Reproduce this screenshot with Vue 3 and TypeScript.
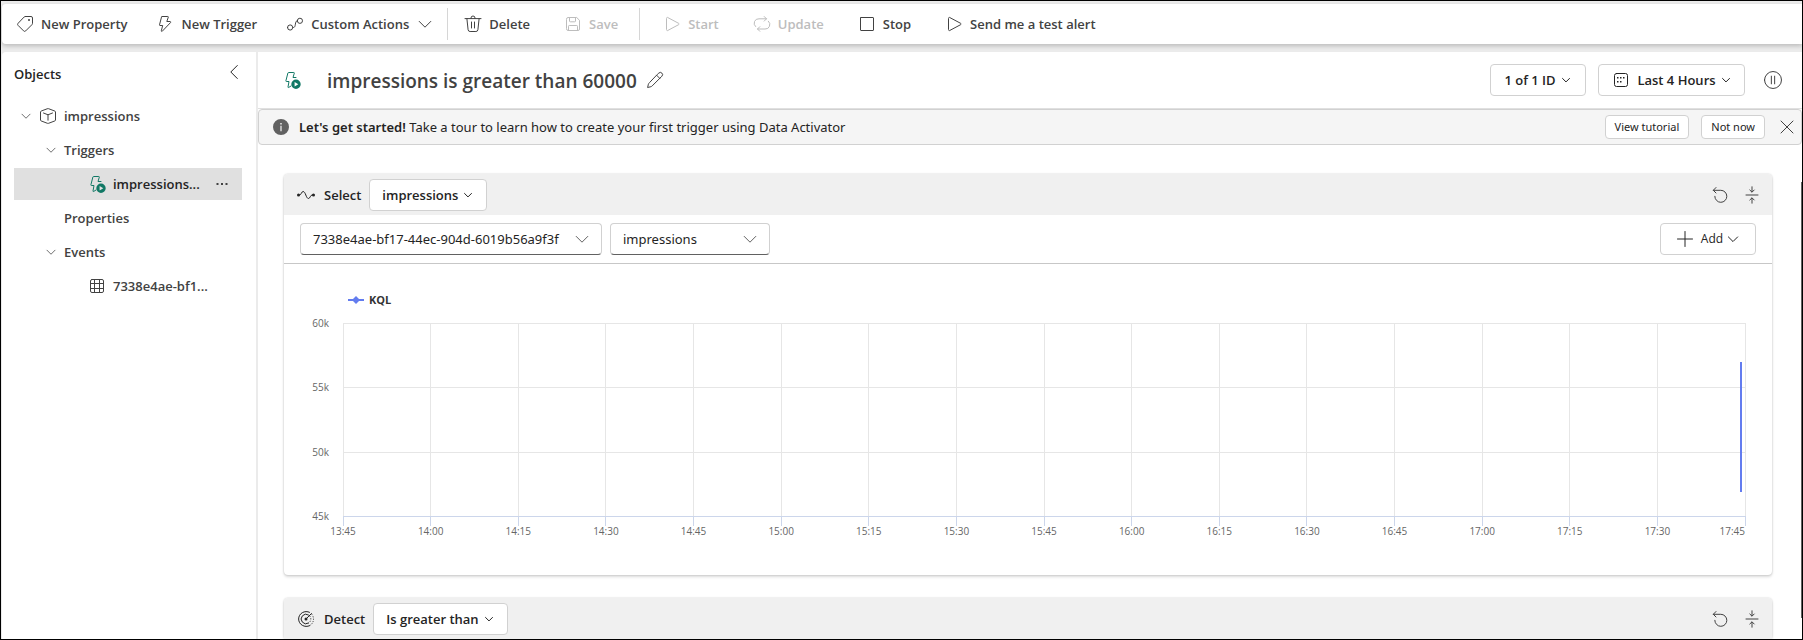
<script setup lang="ts">
import { h, ref } from 'vue'
import type { FunctionalComponent } from 'vue'

interface Glyph {
  stroke?: string
  fill?: string
  thin?: string
}

const glyphs: Record<string, Glyph> = {
  tag: {
    stroke: 'M10.4 2.5H16A1.5 1.5 0 0 1 17.5 4v5.3a2 2 0 0 1-.6 1.4l-6.2 6.2a1.5 1.5 0 0 1-2.1 0l-5.5-5.5a1.5 1.5 0 0 1 0-2.1L9 3.1a2 2 0 0 1 1.4-.6z',
    fill: 'M13 6a1 1 0 1 0 2 0a1 1 0 1 0-2 0z',
  },
  flash: {
    stroke: 'M7.2 2.5h5.6c.4 0 .6.3.5.7L11.8 7.5h3.4c.5 0 .7.6.4 1l-8.4 8.8c-.4.4-1 0-.9-.5l1.4-5.3H5c-.4 0-.6-.3-.5-.7l2-7.7c.1-.4.4-.6.7-.6z',
  },
  flow: {
    stroke: 'M2.5 13.5a2.6 2.6 0 1 0 5.2 0a2.6 2.6 0 1 0-5.2 0zM12.3 6.8a2.6 2.6 0 1 0 5.2 0a2.6 2.6 0 1 0-5.2 0zM7.7 13.5h.6c3.2 0 .9-6.7 4-6.7',
  },
  trash: {
    stroke: 'M2 4.6h16M8 4.6V4a2 2 0 0 1 4 0v.6M3.9 4.6l1.2 11.2a2 2 0 0 0 2 1.7h5.8a2 2 0 0 0 2-1.7L16.1 4.6M8.5 8v6M11.5 8v6',
  },
  save: {
    stroke: 'M3.5 5A1.5 1.5 0 0 1 5 3.5h8.7l2.8 2.8V15a1.5 1.5 0 0 1-1.5 1.5H5A1.5 1.5 0 0 1 3.5 15zM6.5 3.5V7a.8.8 0 0 0 .8.8h4.4a.8.8 0 0 0 .8-.8V3.5M5.5 16.5v-4.2a.8.8 0 0 1 .8-.8h7.4a.8.8 0 0 1 .8.8v4.2',
  },
  play: {
    stroke: 'M4.5 4.2c0-.7.6-1 1.2-.7l10.9 5.8c.6.3.6 1.1 0 1.4L5.7 16.5c-.6.3-1.2 0-1.2-.7z',
  },
  update: {
    stroke: 'M12.2 2.5l2.3 2.3-2.3 2.3M14.5 4.8H7A4.5 4.5 0 0 0 3.6 12.6M7.8 17.3l-2.3-2.3 2.3-2.3M5.5 15H13a4.5 4.5 0 0 0 3.4-7.8',
  },
  stop: { stroke: 'M4 3.500h12a.5.5 0 0 1 .5.5v12a.5.5 0 0 1-.5.5H4a.5.5 0 0 1-.5-.5V4a.5.5 0 0 1 .5-.5z' },
  chevron: { stroke: 'M4.2 7.4L10 13.2l5.800-5.800' },
  back: { stroke: 'M13.300 3.500L6.800 10l6.500 6.500' },
  cube: {
    stroke: 'M9.4 2.7a1.6 1.6 0 0 1 1.2 0l6.3 2.4a1 1 0 0 1 .6.9v8a1 1 0 0 1-.6.9l-6.3 2.4a1.6 1.6 0 0 1-1.2 0l-6.3-2.4a1 1 0 0 1-.6-.9V6a1 1 0 0 1 .6-.9zM5.5 7L10 8.8 14.5 7M10 8.8v5.4',
  },
  trigger: {
    stroke: 'M9 16l-2.4 1.5c-.4.2-.7 0-.6-.5l1-5.500H4.4c-.4 0-.6-.3-.5-.7l2-7.800c.1-.3.4-.5.7-.5h5.200c.4 0 .6.3.5.7L11 7.500h3',
    fill: 'M14 9.600a4.700 4.700 0 1 0 0 9.400a4.700 4.700 0 0 0 0-9.400zM12.600 12v4.600l3.700-2.300z',
  },
  grid: {
    stroke: 'M5 3.500h10A1.500 1.500 0 0 1 16.500 5v10a1.500 1.500 0 0 1-1.500 1.500H5A1.500 1.500 0 0 1 3.500 15V5A1.500 1.500 0 0 1 5 3.500zM7.500 3.500v13M12.500 3.500v13M3.500 7.500h13M3.500 12.500h13',
  },
  more: { fill: 'M4.500 9h2v2h-2zM9 9h2v2H9zM13.500 9h2v2h-2z' },
  pencil: {
    stroke: 'M12.600 4.200l1.200-1.100a2.150 2.150 0 0 1 3.100 3.100L7.200 15.900a3 3 0 0 1-1.300.8l-3.300.8.8-3.300a3 3 0 0 1 .8-1.300zM11.600 5.200l3.200 3.200',
  },
  info: {
    fill: 'M10 2a8 8 0 1 0 0 16a8 8 0 0 0 0-16zM9.300 6h1.400v1.500H9.300zM9.400 8.800h1.200v5.400H9.400z',
  },
  calendar: {
    stroke: 'M5.500 3.500h9a2 2 0 0 1 2 2v9a2 2 0 0 1-2 2h-9a2 2 0 0 1-2-2v-9a2 2 0 0 1 2-2z',
    fill: 'M9 7h1.500v1.500H9zM12 7h1.500v1.500H12zM6 7h1.500v1.500H6zM6 11h1.500v1.500H6zM9 11h1.500v1.500H9z',
  },
  pause: { stroke: 'M2.300 10a7.700 7.700 0 1 0 15.400 0a7.700 7.700 0 1 0-15.400 0zM8.500 6.500v7M11.500 6.500v7' },
  close: { stroke: 'M4 4l12 12M16 4L4 16' },
  wave: {
    stroke: 'M3 10h.6c1.600 0 1.900-3.500 3.500-3.500 2.600 0 2.800 7 5.400 7 1.600 0 1.900-3.500 3.500-3.500h1',
    fill: 'M1 10a1.500 1.500 0 1 0 3 0a1.500 1.500 0 1 0-3 0zM16 10a1.500 1.500 0 1 0 3 0a1.500 1.500 0 1 0-3 0z',
  },
  radar: {
    stroke: 'M13.500 3.300A7.500 7.500 0 1 0 13.500 16.700M12.500 5.900A4.800 4.800 0 1 0 12.500 14.100M10 10l5.500-5.500',
    thin: 'M15.800 5.300a7.500 7.500 0 0 1-2.300 11.400M13.800 7.100a4.800 4.800 0 0 1-1.300 7',
    fill: 'M8.500 10a1.500 1.500 0 1 0 3 0a1.500 1.500 0 1 0-3 0z',
  },
  undo: { stroke: 'M6 2.500L3.300 5.300 6 8M3.300 5.300h7.500a6 6 0 1 1-6 6' },
  collapse: {
    stroke: 'M4 10h12M10 1.800v5M7.800 5l2.200 2.200L12.200 5M10 18.200v-5M7.800 15l2.200-2.200 2.200 2.200',
  },
  plus: { stroke: 'M10 2.500v15M2.500 10h15' },
}

const Icon: FunctionalComponent<{ name: string; size?: number }> = (props) => {
  const glyph = glyphs[props.name]
  const size = props.size ?? 20
  const unit = 20 / size
  return h(
    'svg',
    { class: 'icon', width: size, height: size, viewBox: '0 0 20 20', 'aria-hidden': 'true' },
    [
      glyph.stroke &&
        h('path', {
          d: glyph.stroke,
          fill: 'none',
          stroke: 'currentColor',
          'stroke-width': unit,
          'stroke-linecap': 'round',
          'stroke-linejoin': 'round',
        }),
      glyph.thin &&
        h('path', {
          d: glyph.thin,
          fill: 'none',
          stroke: 'currentColor',
          'stroke-width': unit,
          'stroke-dasharray': '1 1.4',
        }),
      glyph.fill && h('path', { d: glyph.fill, fill: 'currentColor', 'fill-rule': 'evenodd' }),
    ],
  )
}
Icon.props = ['name', 'size']

interface Command {
  label: string
  icon: string
  disabled?: boolean
  menu?: boolean
}

const commandGroups: Command[][] = [
  [
    { label: 'New Property', icon: 'tag' },
    { label: 'New Trigger', icon: 'flash' },
    { label: 'Custom Actions', icon: 'flow', menu: true },
  ],
  [
    { label: 'Delete', icon: 'trash' },
    { label: 'Save', icon: 'save', disabled: true },
  ],
  [
    { label: 'Start', icon: 'play', disabled: true },
    { label: 'Update', icon: 'update', disabled: true },
    { label: 'Stop', icon: 'stop' },
    { label: 'Send me a test alert', icon: 'play' },
  ],
]

interface TreeRow {
  label: string
  level: number
  expandable?: boolean
  icon?: string
  selected?: boolean
}

const tree: TreeRow[] = [
  { label: 'impressions', level: 1, expandable: true, icon: 'cube' },
  { label: 'Triggers', level: 2, expandable: true },
  { label: 'impressions...', level: 3, icon: 'trigger', selected: true },
  { label: 'Properties', level: 2 },
  { label: 'Events', level: 2, expandable: true },
  { label: '7338e4ae-bf1...', level: 3, icon: 'grid' },
]

const source = ref('7338e4ae-bf17-44ec-904d-6019b56a9f3f')
const column = ref('impressions')

const plotHeight = 193
const yTicks = [60, 55, 50, 45].map((value, i) => ({
  label: `${value}k`,
  y: Math.round((plotHeight * i) / 3),
}))
const xTicks = Array.from({ length: 17 }, (_, i) => {
  const minutes = 13 * 60 + 45 + i * 15
  return {
    label: `${Math.floor(minutes / 60)}:${String(minutes % 60).padStart(2, '0')}`,
    x: `${(i * 100) / 16}%`,
    last: i === 16,
  }
})
const toY = (value: number) => ((60 - value) / 15) * plotHeight
const series = { x: '99.7%', from: toY(57), to: toY(46.9) }
</script>

<template>
  <div class="shell">
    <nav class="toolbar" aria-label="Commands">
      <div v-for="(group, g) in commandGroups" :key="g" class="group">
        <button v-for="cmd in group" :key="cmd.label" type="button" class="command" :disabled="cmd.disabled">
          <Icon :name="cmd.icon" />
          <span>{{ cmd.label }}</span>
          <Icon v-if="cmd.menu" name="chevron" />
        </button>
      </div>
    </nav>

    <div class="body">
      <aside class="sidebar">
        <header class="sidebar-head">
          <h2>Objects</h2>
          <button type="button" class="ghost back" aria-label="Collapse pane"><Icon name="back" /></button>
        </header>
        <ul class="tree">
          <li v-for="row in tree" :key="row.label" class="row" :class="[`level-${row.level}`, { selected: row.selected }]">
            <button type="button" class="node">
              <span class="twisty"><Icon v-if="row.expandable" name="chevron" :size="14" /></span>
              <Icon v-if="row.icon" :name="row.icon" :class="row.icon" />
              <span>{{ row.label }}</span>
            </button>
            <button v-if="row.selected" type="button" class="ghost" aria-label="More options"><Icon name="more" /></button>
          </li>
        </ul>
      </aside>

      <main class="main">
        <header class="page-head">
          <Icon name="trigger" class="trigger" />
          <h1>impressions is greater than 60000</h1>
          <button type="button" class="ghost" aria-label="Rename"><Icon name="pencil" /></button>
          <div class="head-actions">
            <button type="button" class="button id-menu">1 of 1 ID<Icon name="chevron" :size="12" /></button>
            <button type="button" class="button time-menu"><Icon name="calendar" />Last 4 Hours<Icon name="chevron" :size="12" /></button>
            <button type="button" class="ghost pause" aria-label="Pause"><Icon name="pause" :size="22" /></button>
          </div>
        </header>

        <section class="banner">
          <Icon name="info" />
          <p><strong>Let's get started!</strong> Take a tour to learn how to create your first trigger using Data Activator</p>
          <button type="button" class="button small">View tutorial</button>
          <button type="button" class="button small">Not now</button>
          <button type="button" class="ghost" aria-label="Close"><Icon name="close" /></button>
        </section>

        <div class="cards">
          <section class="card">
            <header class="card-head">
              <Icon name="wave" />
              <h3>Select</h3>
              <button type="button" class="button">impressions<Icon name="chevron" :size="12" /></button>
              <div class="card-tools">
                <button type="button" class="ghost" aria-label="Reset"><Icon name="undo" /></button>
                <button type="button" class="ghost" aria-label="Collapse"><Icon name="collapse" /></button>
              </div>
            </header>
            <div class="filters">
              <div class="field source">
                <select v-model="source" aria-label="Event source">
                  <option>7338e4ae-bf17-44ec-904d-6019b56a9f3f</option>
                </select>
                <Icon name="chevron" />
              </div>
              <div class="field column">
                <select v-model="column" aria-label="Column">
                  <option>impressions</option>
                </select>
                <Icon name="chevron" />
              </div>
              <button type="button" class="button add"><Icon name="plus" /><span>Add</span><Icon name="chevron" :size="16" /></button>
            </div>
            <figure class="chart">
              <figcaption class="legend">
                <svg width="16" height="8" viewBox="0 0 16 8" aria-hidden="true">
                  <path d="M0 4h16" stroke="#637cef" stroke-width="2" />
                  <path d="M8 0l4 4-4 4-4-4z" fill="#637cef" />
                </svg>
                KQL
              </figcaption>
              <svg class="plot" role="img" aria-label="impressions over the last four hours">
                <g class="gridlines">
                  <line v-for="t in xTicks" :key="t.label" :x1="t.x" :x2="t.x" y1="0" :y2="plotHeight" />
                  <line v-for="t in yTicks" :key="t.label" x1="0" x2="100%" :y1="t.y" :y2="t.y" />
                </g>
                <g class="axis">
                  <line x1="0" x2="100%" :y1="plotHeight" :y2="plotHeight" />
                  <line v-for="t in xTicks" :key="t.label" :x1="t.x" :x2="t.x" :y1="plotHeight" :y2="plotHeight + 10" />
                </g>
                <g class="tick-labels">
                  <text v-for="t in yTicks" :key="t.label" x="-14" :y="t.y + 4" text-anchor="end">{{ t.label }}</text>
                  <text v-for="t in xTicks" :key="t.label" :x="t.x" :y="plotHeight + 19" :text-anchor="t.last ? 'end' : 'middle'">{{ t.label }}</text>
                </g>
                <line class="series" :x1="series.x" :x2="series.x" :y1="series.from" :y2="series.to" />
              </svg>
            </figure>
          </section>

          <section class="card">
            <header class="card-head">
              <Icon name="radar" />
              <h3>Detect</h3>
              <button type="button" class="button">Is greater than<Icon name="chevron" :size="12" /></button>
              <div class="card-tools">
                <button type="button" class="ghost" aria-label="Reset"><Icon name="undo" /></button>
                <button type="button" class="ghost" aria-label="Collapse"><Icon name="collapse" /></button>
              </div>
            </header>
          </section>
        </div>
        <div class="scrollbar"></div>
      </main>
    </div>
  </div>
</template>

<style>
body {
  margin: 0;
}
</style>

<style scoped>
.shell {
  box-sizing: border-box;
  height: 100vh;
  display: flex;
  flex-direction: column;
  gap: 8px;
  padding: 3px 0 0 1px;
  overflow: hidden;
  border: 1px solid #000;
  background: #ebebeb;
  color: #242424;
  font: 400 13px/20px "Open Sans", "Noto Sans", sans-serif;
}
.shell * {
  box-sizing: border-box;
}
button,
select {
  font: inherit;
  color: inherit;
}
h1,
h2,
h3,
p {
  margin: 0;
}
.icon {
  display: block;
  flex: none;
}
.ghost {
  display: flex;
  padding: 0;
  border: 0;
  background: none;
  color: #424242;
}

.toolbar {
  flex: none;
  display: flex;
  height: 40px;
  padding: 4px 0 4px 13px;
  border-radius: 4px 0 0 4px;
  background: #fff;
  box-shadow: 0 2px 4px rgba(0, 0, 0, 0.2);
}
.group {
  display: flex;
  gap: 28px;
}
.group + .group {
  gap: 33px;
  margin-left: 12px;
  padding-left: 15px;
  border-left: 1px solid #d6d6d6;
}
.group:last-child {
  padding-left: 22px;
  margin-left: 21px;
}
.command {
  display: flex;
  align-items: center;
  gap: 6px;
  padding: 0;
  border: 0;
  background: none;
  color: #424242;
  font-weight: 600;
  white-space: nowrap;
}
.command:disabled {
  color: #bdbdbd;
}

.body {
  flex: 1;
  min-height: 0;
  display: flex;
  gap: 2px;
}
.sidebar {
  flex: none;
  width: 254px;
  padding: 10px 14px 0 12px;
  border-radius: 4px 0 0 0;
  background: #fff;
}
.sidebar-head {
  display: flex;
  align-items: flex-start;
  justify-content: space-between;
  height: 38px;
}
.back {
  margin-right: -2px;
  color: #242424;
}
.sidebar-head h2 {
  padding-top: 2px;
  font-size: 13px;
  font-weight: 600;
}
.tree {
  display: flex;
  flex-direction: column;
  gap: 2px;
  margin: 0;
  padding: 0;
  list-style: none;
}
.row {
  display: flex;
  align-items: center;
  justify-content: space-between;
  height: 32px;
  padding-right: 10px;
  color: #424242;
}
.selected {
  background: #e0e0e0;
  color: #242424;
}
.node {
  display: flex;
  align-items: center;
  gap: 6px;
  padding: 0 0 0 5px;
  border: 0;
  background: none;
  font-weight: 600;
}
.level-2 .node {
  padding-left: 30px;
}
.level-3 .node {
  padding-left: 53px;
}
.twisty {
  width: 14px;
  color: #707070;
}
.level-1 .twisty {
  margin-right: -1px;
}
.trigger {
  color: #117865;
}

.main {
  position: relative;
  flex: 1;
  min-width: 0;
  display: flex;
  flex-direction: column;
  background: #fff;
}
.page-head {
  flex: none;
  display: flex;
  align-items: center;
  height: 57px;
  padding: 0 18px 0 24px;
  border-bottom: 1px solid #e0e0e0;
}
.page-head h1 {
  margin: 0 8px 0 25px;
  padding-top: 2px;
  color: #424242;
  font-size: 19px;
  font-weight: 600;
  line-height: 28px;
  white-space: nowrap;
}
.head-actions {
  display: flex;
  align-items: center;
  gap: 12px;
  margin-left: auto;
}
.button {
  display: flex;
  align-items: center;
  justify-content: center;
  gap: 4px;
  height: 32px;
  padding: 0 12px;
  border: 1px solid #d1d1d1;
  border-radius: 4px;
  background: #fff;
  font-weight: 600;
  white-space: nowrap;
}
.id-menu {
  width: 96px;
}
.time-menu {
  width: 147px;
}
.time-menu .icon:first-child {
  margin-right: 2px;
}
.pause {
  margin-left: 5px;
}

.banner {
  flex: none;
  display: flex;
  align-items: center;
  gap: 12px;
  height: 36px;
  padding: 0 4px 0 12px;
  border: 1px solid #d1d1d1;
  border-radius: 4px;
  background: #f5f5f5;
}
.banner > .icon {
  color: #616161;
}
.banner p {
  flex: 1;
  margin-left: -4px;
  font-family: "Noto Sans", "Open Sans", sans-serif;
}
.banner strong {
  font-weight: 600;
}
.small {
  height: 24px;
  padding: 0 9px;
  font-family: "Noto Sans", "Open Sans", sans-serif;
  font-size: 11px;
  font-weight: 400;
}

.cards {
  flex: 1;
  min-height: 0;
  display: flex;
  flex-direction: column;
  gap: 23px;
  padding: 29px 30px 0 26px;
  overflow: hidden;
}
.card {
  flex: none;
  border-radius: 4px;
  background: #fff;
  box-shadow: 0 0 2px rgba(0, 0, 0, 0.2), 0 2px 3px rgba(0, 0, 0, 0.14);
}
.card-head {
  display: flex;
  align-items: center;
  gap: 8px;
  height: 41px;
  padding: 0 10px 0 12px;
  border-radius: 4px 4px 0 0;
  background: #f0f0f0;
}
.card-head h3 {
  font-size: 13px;
  font-weight: 600;
}
.card-tools {
  display: flex;
  gap: 12px;
  margin-left: auto;
}
.filters {
  display: flex;
  gap: 8px;
  padding: 8px 16px 8px 16px;
  border-bottom: 1px solid #c7c7c7;
}
.field {
  display: grid;
  align-items: center;
}
.field > * {
  grid-area: 1 / 1;
}
.field .icon {
  justify-self: end;
  margin-right: 10px;
  color: #616161;
  pointer-events: none;
}
.field select {
  width: 100%;
  height: 32px;
  padding: 0 32px 0 12px;
  border: 1px solid #d1d1d1;
  border-bottom-color: #616161;
  border-radius: 4px;
  background: #fff;
  font-family: "Noto Sans", "Open Sans", sans-serif;
  appearance: none;
}
.source {
  width: 302px;
}
.column {
  width: 160px;
}
.add {
  width: 96px;
  margin-left: auto;
  gap: 2px;
  font-size: 12px;
  font-weight: 400;
}
.add span {
  margin-left: 4px;
}

.chart {
  margin: 0;
  padding: 26px 27px 47px 59px;
}
.legend {
  display: flex;
  align-items: center;
  gap: 5px;
  height: 20px;
  margin: 0 0 13px 5px;
  color: #333;
  font-size: 11px;
  font-weight: 700;
}
.plot {
  display: block;
  width: 100%;
  height: 205px;
  overflow: visible;
}
.plot line {
  shape-rendering: crispEdges;
}
.gridlines {
  stroke: #e6e6e6;
}
.axis {
  stroke: #ccd6eb;
}
.series {
  stroke: #637cef;
  stroke-width: 2px;
}
.tick-labels {
  fill: #666;
  font-size: 10px;
}
.scrollbar {
  position: absolute;
  top: 130px;
  right: 0;
  width: 1px;
  height: 436px;
  background: #616161;
}
</style>
